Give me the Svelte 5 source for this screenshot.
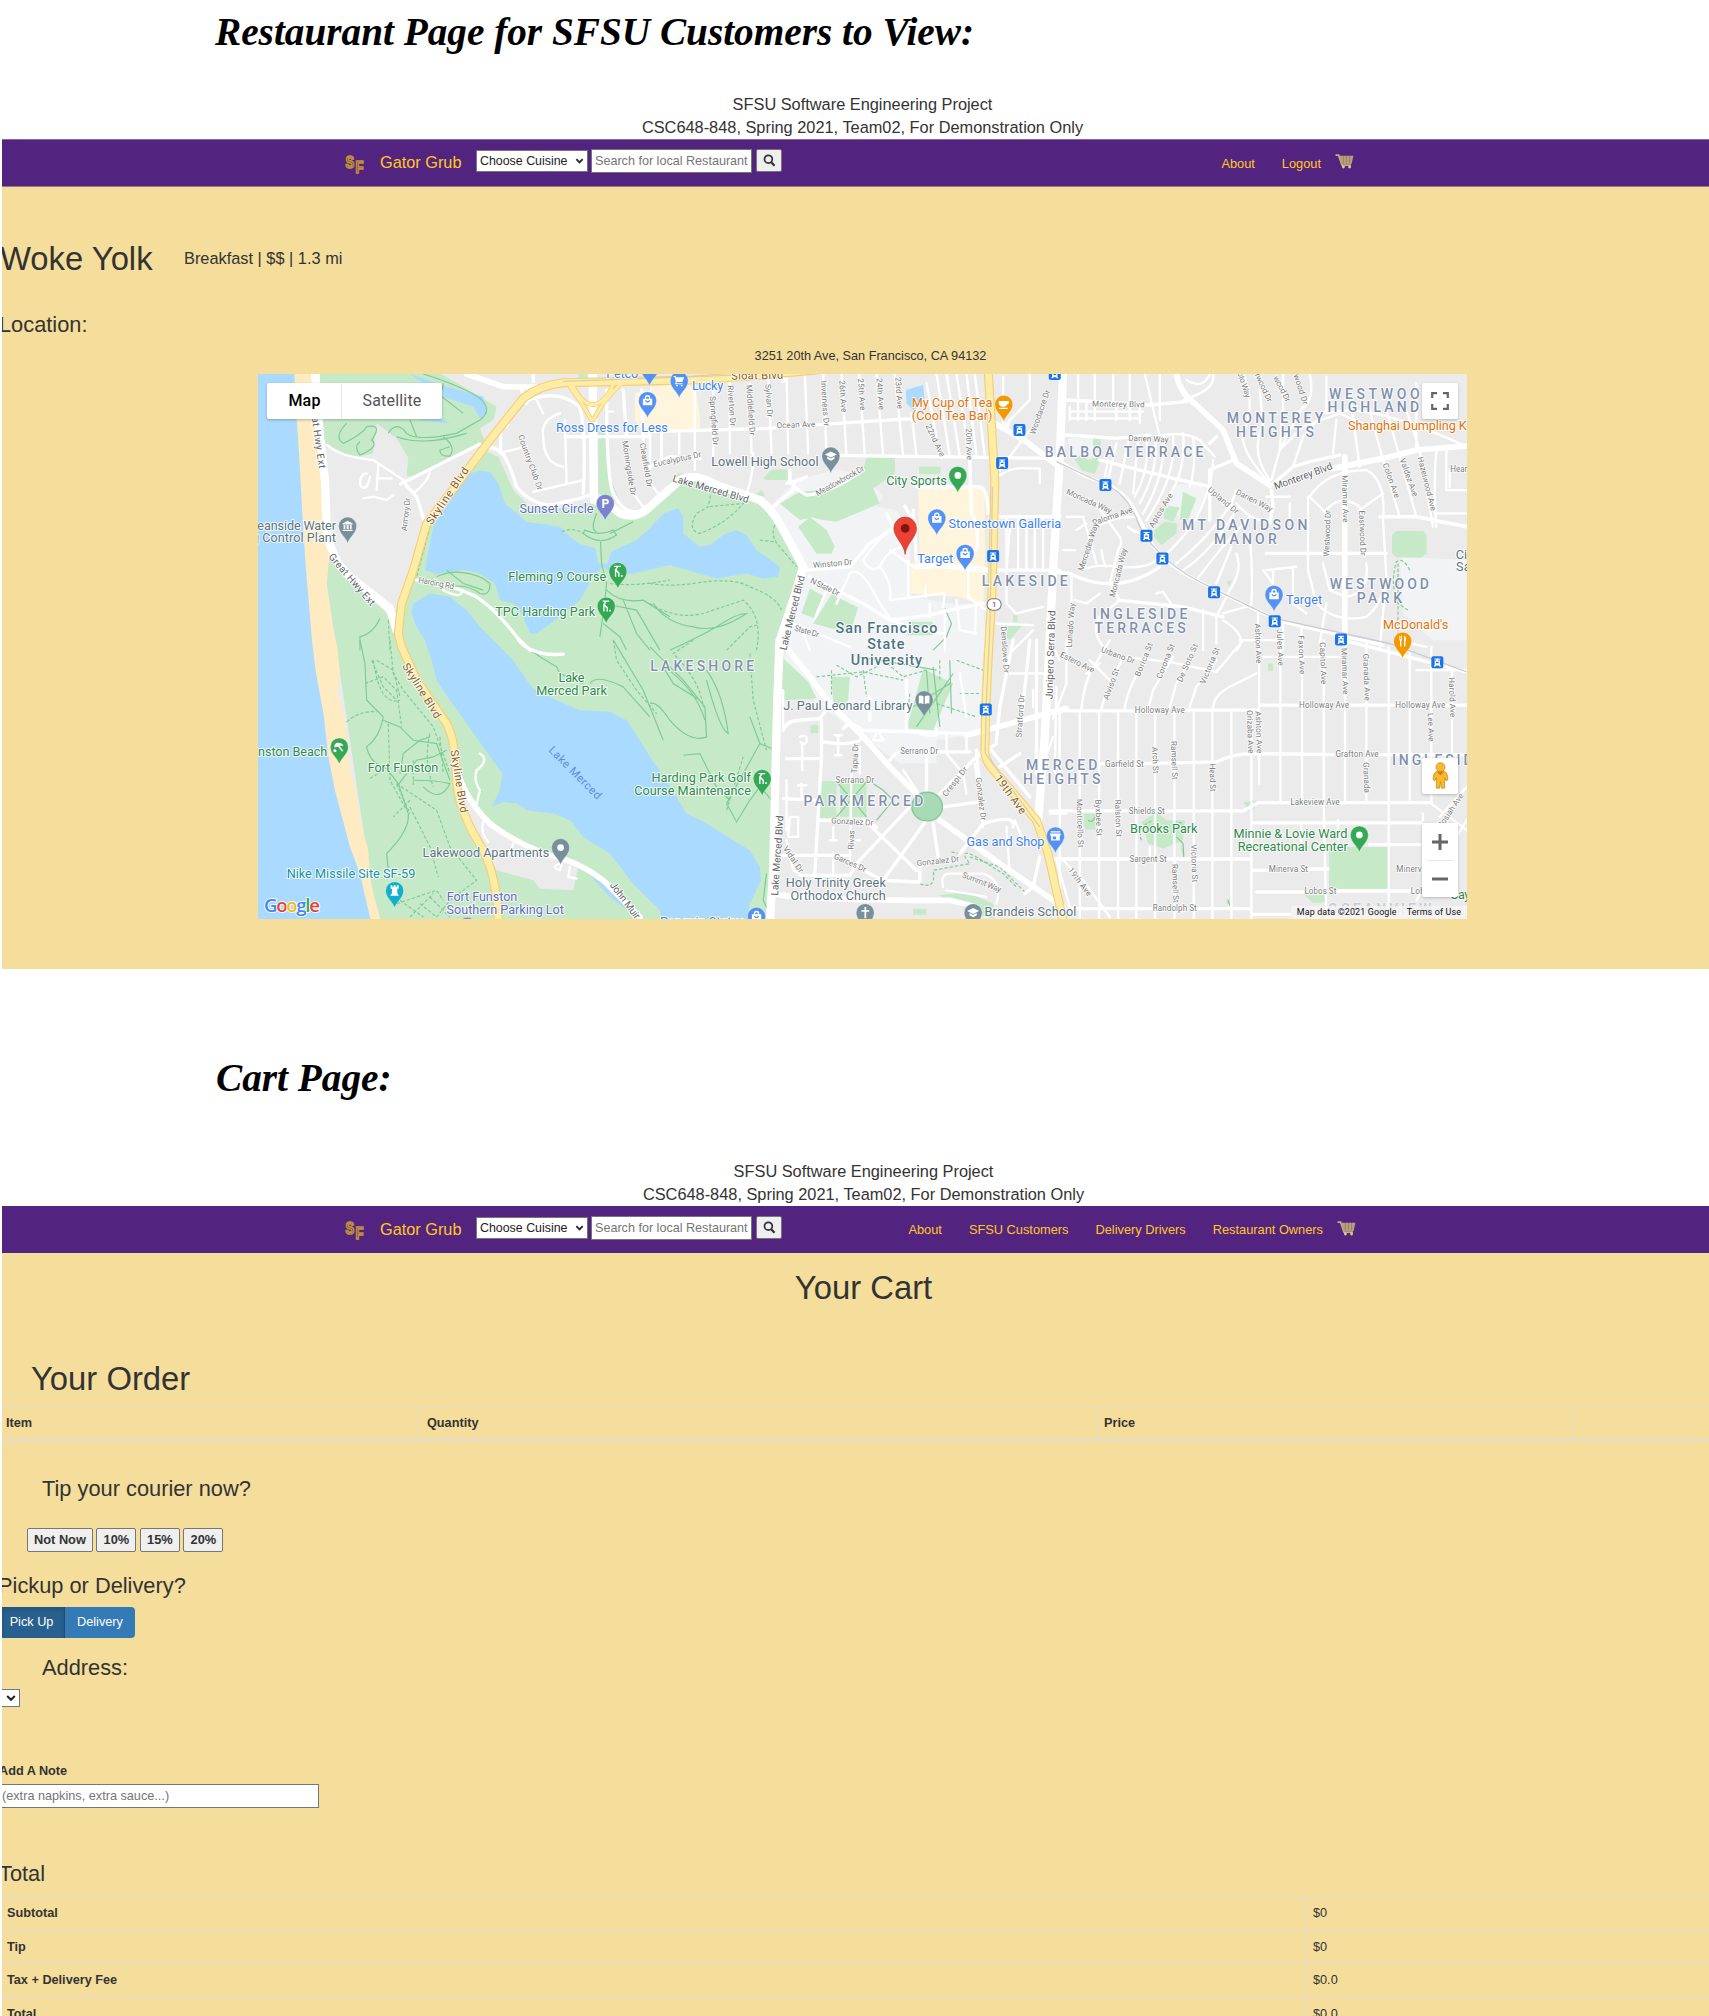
<script>
  const guestLinks = ['About', 'Logout'];
  const publicLinks = ['About', 'SFSU Customers', 'Delivery Drivers', 'Restaurant Owners'];
  const tips = ['Not Now', '10%', '15%', '20%'];
  const totals = [
    ['Subtotal', '$0'],
    ['Tip', '$0'],
    ['Tax + Delivery Fee', '$0.0'],
    ['Total', '$0.0']
  ];

  // The map is drawn from sectors; every sector has its own origin, 3 units to a pixel.
  const sectors = [
    {
      x: 0, y: 0,
      park: [
        'M210,12H575L640,50 740,110 730,150 690,175 705,215 500,322 470,318 475,262 440,205 380,160 368,252 300,262 230,222 190,140Z',
        'M985,12H1012V50H985ZM1045,170L1070,190 1075,300 1110,400 1045,370Z'
      ],
      water: ['M505,150L600,160 560,140ZM480,12L590,50 700,80 712,130 690,145 670,110 580,80Z'],
      land: ['M740,240L960,200 1010,380 880,410 800,350Z'],
      mall: ['M1155,70L1200,60V200H1190L1155,150Z'],
      trail: [
        'M290,160Q250,200 280,220Q340,190 350,170Q400,160 365,210Q390,230 330,255Q310,230 330,215M415,190Q440,150 470,190Q500,215 620,190L690,150Q730,120 690,85Q640,50 520,12M440,200Q520,230 650,190M480,150L500,200M550,60L640,130M580,40L560,140M600,230L570,240Q570,260 600,258Q620,230 580,200',
        'M1000,490Q1050,530 1100,495L1090,480Q1050,500 1005,480ZM1040,430Q1020,480 1040,485M1150,455Q1100,480 1080,490M1052,515L1055,580 1070,640 1065,690 1050,800M1070,660Q1110,700 1180,690L1260,740M1120,690L1160,790 1200,840M1060,760L1110,800 1130,840M1060,700L1160,720 1230,840',
        'M560,620Q620,590 700,625L720,640Q720,680 690,670Q650,640 600,650M590,600L640,640 700,660M390,745Q370,790 330,800V840'
      ],
      dash: ['M700,250L620,350 540,470 500,620M935,485Q970,470 1000,490M1080,640Q1150,650 1260,630M415,750L420,840'],
      wide: ['M650,12L760,50 880,52'],
      mid: [
        'M752,180V240Q780,280 800,350Q840,400 900,405L990,385 1020,375M700,230Q740,230 755,250M452,342L690,222M468,345L500,380 525,460',
        'M815,60L830,100M770,170Q790,100 850,85Q930,60 990,110Q1010,200 1000,370M1070,60Q1070,330 1090,370Q1120,430 1160,425M500,630Q600,640 680,680Q740,720 800,800L840,840',
        'M945,200H1200M850,12V35M1120,60L1130,200M1175,60L1180,210'
      ],
      thin: [
        'M232,225Q270,260 370,270L460,330M385,285L380,360M350,310Q330,310 330,345Q350,370 360,320M380,325H425M340,385L370,380 410,390 430,375M490,370Q540,330 540,300',
        'M765,245L830,230M860,90L880,130M930,130Q870,150 880,200Q880,280 940,290M945,150L950,340M850,365L1000,330M580,660Q640,690 635,660M1200,190V300M1235,180V260M1070,125H1090M1150,370L1180,410M1205,345L1225,370'
      ]
    },
    {
      x: 1200, y: 0,
      park: [
        'M390,400L450,365 520,360 600,330 640,300 650,262 735,264 735,310 670,355 690,400 560,455 520,450 480,440 530,480 555,530 545,550 500,550 445,470 475,445 450,450Z',
        'M340,325L365,298 413,298V330L350,330ZM315,375L335,360 345,375 325,385ZM808,290H872V312H808ZM455,730L480,655 525,680 500,720 495,745ZM545,672L625,712 600,790 490,760ZM775,755H848V795H775ZM1090,735H1103V755H1090ZM1075,768L1118,765 1080,810 1070,800Z'
      ],
      water: ['M768,60L820,45 825,100 790,120 770,100Z'],
      land: [],
      campus: ['M360,410L440,330 560,300 640,310 700,380 680,410 740,420 780,480 785,680 900,700 1000,700 1010,840H380L470,600Z'],
      mall: ['M0,50L135,40 150,140 150,175 0,190ZM805,350H1005V600L1000,710 930,680 780,670 785,580 810,570Z'],
      trail: ['M10,700Q50,760 130,770Q200,790 290,730Q260,730 200,770Q150,800 60,840M885,715L905,760 890,800 850,840'],
      dash: [
        'M185,360L175,410 140,430Q110,480 150,490Q230,460 280,400L175,410M375,465Q360,500 390,530L440,590M330,510L375,515',
        'M0,640Q60,650 130,640Q250,620 300,650Q380,680 395,720M0,700Q80,750 160,730L280,690Q340,740 320,840M230,840L300,770 320,765'
      ],
      wide: ['M1035,160L1130,215 1215,280M800,590L870,585 1010,600', 'M400,30V0'],
      mid: [
        'M0,185L340,176 640,155 790,146M560,256L1000,262 1230,265M0,290L60,260 150,265M370,410L430,360Q440,320 410,340M430,350L470,375Q540,370 640,300M420,300V340L470,320',
        'M470,600L600,590 660,520 745,465M480,620L560,660 640,700 720,750 840,735 900,720 1000,700M790,420L800,570M765,408L800,470M710,430L745,500M800,350H990Q1015,360 1015,430M960,270L965,430Q990,470 980,540L920,545',
        'M1040,600H1230M1045,440H1230'
      ],
      thin: [
        'M35,185V270M88,185V250M135,40V300M190,40V260M240,12V250M300,40L305,250M355,12L365,250M290,370Q310,320 310,250M410,12L415,250M465,12L475,250M520,12L530,250M575,12L590,258M628,12L645,258M680,12L700,258M735,12L760,258M785,130L800,258M860,12L900,258M890,12L930,258M920,12L960,262M950,12L980,258M975,12L1005,258M830,40L860,200',
        'M600,610Q630,580 690,700L720,745M560,700L600,610M640,570Q660,610 690,590Q710,540 760,530M690,590Q730,640 720,690M640,570Q700,480 740,480M720,540L790,590M720,690L880,670M827,650V680M885,670L880,710M720,750L780,770 880,790M885,720V840M920,690L930,780 980,790M980,700L975,790M495,745L530,660M430,760L600,830M460,790L480,840M775,570V680M955,600V680L1010,720M840,740V700',
        'M1060,170L1140,90V12M1070,180L1080,150M1045,320Q1080,290 1130,295H1170V340M1050,300L1140,180M1060,20V160M1070,440V700L1100,730 1180,710M1080,475L1070,600M1105,450V600M1130,450V600M1155,450V600M1180,450V600M1040,760L1150,765M1090,840L1150,780'
      ]
    },
    {
      x: 2400, y: 0,
      park: [
        'M130,205H153V235L130,225ZM75,268L95,255 115,270 155,260 135,312 95,300ZM400,365L440,385 415,450 390,450ZM345,420L360,408 390,412 370,455 342,445ZM315,480L345,455 383,460 380,490 335,525 312,500ZM1040,483H1120L1131,495V550L1115,562H1040L1027,550V495ZM530,635L545,630 540,650Z'
      ],
      campus: ['M55,205H130V260L60,255ZM375,345L440,340 475,360 450,430 400,460 355,400ZM1050,560L1251,570V810H1150L1060,730Z'],
      trail: [],
      dash: ['M1080,600Q1060,560 1040,575Q1020,640 1045,700L1075,720M1045,580V810'],
      wide: ['M380,12Q390,70 440,105L520,180 560,280 660,345M850,295L1000,265 1100,240 1251,228', 'M885,260V820'],
      mid: [
        'M50,90L140,95 300,105 410,95M50,195L200,205 300,195M20,270L110,320 180,345Q240,380 260,430L300,510Q340,580 440,630L620,720 700,755 1000,825',
        'M150,270L370,325 480,350M660,350L730,290 780,275 870,255M0,605L60,610Q200,680 330,590M205,690L400,710 520,740M665,360L670,410 660,460M650,550H1010',
        'M550,270L480,300 480,450M480,220L500,200M990,440L1050,440 1100,440 1251,470'
      ],
      thin: [
        'M85,12V90M135,12V100M190,12V100M240,12V100M285,12L330,200M330,12V150M60,145H270M60,125H280M60,150V110M85,90V150M110,90V150M135,100V150M270,100V160M240,100V150M200,100V150M400,90Q500,60 490,12M320,200Q400,180 450,210L495,260M410,30Q460,60 480,12',
        'M175,270L165,320M200,220L175,330M235,215L210,340M265,215L250,370M290,210Q300,300 255,380M315,200Q330,290 270,400M340,200Q350,310 280,430M370,200Q380,320 290,450M400,190Q410,320 340,400M430,200Q440,290 420,350M490,270Q490,330 460,400Q430,480 340,560M560,360L545,400Q480,500 380,580M545,400L560,420Q480,550 400,600M600,440L510,540 440,630M545,530L500,640M560,550Q580,600 540,660L500,740V820M600,500Q610,600 605,700',
        'M45,370L130,390 210,500Q220,520 205,540M125,490Q160,440 260,440M80,480L110,460M50,440L100,440 140,580M90,600Q150,580 200,590Q300,600 330,560M205,540L180,640 210,690L150,740Q120,790 170,840M155,540Q160,580 170,590M235,470Q270,500 290,480M40,540H75M65,610V760M75,690L110,700 150,670M370,710L340,665 320,670M520,730L605,705M520,750Q600,800 560,840M460,720V840',
        'M580,12Q620,100 580,190Q570,240 660,340M630,60L640,160Q600,250 660,330M700,12V110L690,240 665,330M760,110Q720,180 690,240M780,12Q800,100 740,130M690,240L760,170 870,130L960,170M830,20V120L760,200 730,290M860,150L850,250M900,70L930,290M960,120L1000,270 1050,440M1010,120L1050,260 1100,440M1070,120L1110,240 1150,470M1160,240Q1150,340 1160,470M1190,240V360H1251M830,130Q950,90 1251,230M1100,40V230',
        'M780,380Q830,300 950,300Q1010,330 1000,450L1010,620Q1000,700 950,740Q860,760 800,700L775,600V380M830,420Q870,370 930,410L945,560M820,580L840,660 890,680Q960,670 950,580M780,380L830,430M1000,370L930,420M830,700L810,820M650,380H720M660,450Q610,460 560,400M720,400V440M650,600L740,590M640,600L670,640M730,590V700L770,730M670,600V640M570,810H700M700,760V840M755,770V840M625,730V840M1160,430H1251M1200,300V350M990,840L1010,620'
      ]
    },
    {
      x: 0, y: 810,
      park: [],
      land: ['M625,430L690,520 780,590 960,660 985,680 970,750 870,745 850,720 740,690 660,560Z'],
      trail: [
        'M330,0L345,70 350,180 400,230Q390,290 350,320Q360,370 410,385L445,430 475,520Q480,570 410,640L415,690M400,240L450,260 490,300 560,310 600,420M450,400L460,340 510,300 540,290M440,440L500,360 550,350 590,330M520,440Q570,490 600,430Q560,420 490,420M1090,0L1180,150 1240,300M1020,130Q1040,100 1120,140L1200,230M800,0L870,50 920,80 930,100 1000,130'
      ],
      dash: ['M290,245Q330,210 380,215M415,250L420,420 470,510M440,430L560,510 600,620 680,720 600,780 560,830M365,60L400,140 440,180M420,0L430,100 460,150 550,260 600,400M345,130L400,110 440,150 455,260M380,60L430,90 450,170M370,60Q390,200 450,180M480,480L430,530M480,500L540,620 565,710M440,430L480,520M490,360L490,440M540,280Q520,360 550,440M570,290L580,400M440,790L560,750 580,780M480,830L550,760M540,770L600,830M510,790L560,830M450,780L520,830 M360,415L400,390M1090,0L1100,60 1160,150 1220,220'],
      wide: ['M625,400Q650,480 720,550Q800,610 900,645Q980,660 1060,720L1170,830'],
      mid: ['M805,0Q850,50 940,42M640,470L625,400'],
      thin: ['M690,340Q720,360 680,390Q670,420 690,450L680,490M700,545Q690,580 715,605M790,610L780,640M930,670Q900,680 930,690L935,670M960,680L955,710 980,715'],
      water: ['M1020,705L1070,740 1180,830 1160,830 1080,770Z']
    },
    {
      x: 1200, y: 810,
      park: [
        'M395,50L475,125 500,175 395,180ZM545,110H600L595,180 565,210 550,180ZM820,85L910,130 850,270 770,265 790,195ZM482,255H505V278H482ZM512,422H560V530L510,535ZM570,422H650V530H570ZM790,805H830V823H790ZM865,765L950,755 1030,790 1035,836 980,820Z'
      ],
      campus: ['M420,0H1000L990,270 960,285 860,300 860,370 750,370 640,290 500,190 400,60Z'],
      trail: [
        'M0,20L100,120 165,200 170,290Q120,310 60,240Q20,180 0,190M40,80L70,130 150,180M45,80Q140,150 165,240M170,90Q220,160 235,280Q210,270 170,120M300,230L330,310 365,325M330,310L230,490 260,545 300,480 330,440M100,345L150,340 200,440 240,480M320,430Q350,460 365,480M350,700L340,780 365,830',
        'M670,430L700,450 730,480 680,540M560,425L600,470 650,530M560,530L650,425M830,90L840,220M850,80L870,260M910,100L800,260M790,200L900,130M630,50L860,90M900,60L905,220'
      ],
      dash: ['M130,0L70,40Q150,120 160,200M300,40L310,180 350,330M230,510L280,350M500,110L640,95 760,120M560,75L620,110 680,80M545,90V170M640,90L650,170M770,250L780,160M700,60L760,110 830,90M870,60V120M860,190L980,230M920,60L1000,90M930,160H990M810,730Q860,750 850,690L960,670Q920,620 980,650L1060,700 1100,740M960,650L1050,680 1130,760M930,640L905,635'],
      wide: ['M400,10L480,110 540,190 640,290 720,380 810,470M870,540L1050,670 1240,800M370,760Q450,780 900,780L980,800', 'M950,285L1100,245 1250,205'],
      mid: [
        'M400,270Q410,240 450,240L510,235 545,190M515,240V350L495,700M580,265Q600,240 640,270L950,280M640,290Q620,320 520,305M410,355H505M400,475L500,480M510,540L650,545 800,690M400,645H600M600,705L620,670 780,500M450,705H600M870,460L1000,330M720,360Q740,330 770,335H960',
        'M650,695L700,720 810,725V670M700,720L830,540M640,540L680,560M880,500L990,485M850,550L865,650M930,640L1000,550Q1100,520 1090,560M830,330V450M660,240V170M770,120V270M1040,310L980,350M980,330L990,440M1125,760L1150,740L1170,650',
        'M1090,0L1050,200 1040,300M1140,0L1110,290M1000,300L1140,470M1160,0V400M1050,380L1110,340'
      ],
      thin: [
        'M450,290Q470,280 472,300Q465,320 452,305M457,310V390M565,285V345M555,285H575M555,345H575M455,430V470M445,435H470M410,420V570M420,530H445V590H415ZM550,560V600M540,600H560M550,640V700M630,320V400M605,400L600,660M620,600H630M410,600L430,690 465,710M400,150V270M760,390L800,450M890,340L940,400 950,460M975,370L1000,560M1070,560L1080,700M1095,540L1120,600M880,740Q870,700 900,700H1000Q1060,720 1040,790M890,750Q960,760 1010,770M680,280L670,300 700,300 690,280M800,270Q810,290 860,285V265M890,285V335M950,285V335M930,100L950,230M1080,100H1180M1150,150V200M1200,520H1250M1210,290L1170,400M1220,140L1215,400M1230,220V500'
      ]
    },
    {
      x: 2400, y: 810,
      park: [
        'M582,485L625,482 610,510 595,508ZM838,620H1015V745H838ZM100,520H137V568H105ZM275,545L320,515 350,540 405,540 400,600 340,625 295,610ZM655,70H670V92H655ZM765,765H828V785L790,788ZM530,775H545V790H530ZM390,600L405,640 400,655Z'
      ],
      trail: ['M380,590L400,610 402,650M535,780L540,795M115,540Q130,550 135,530'],
      dash: ['M275,600Q260,560 310,540M370,545Q410,540 400,580'],
      mid: [
        'M0,212L90,212H260M405,210H625M630,195H750M900,195H1035M1190,195H1251M150,370H165M285,370L500,365Q550,340 610,340L850,343M990,343H1251M0,512H230M350,512H580L625,487L720,487M870,487H1145M610,548H1115M0,656H235M355,656H605M60,805H310M445,805H600M610,822H720M610,690H655M775,686H835M620,755H760M865,752H1090M960,613H1110M880,0L1251,95'
      ],
      thin: [
        'M30,212V836M90,212V836M148,212V836M205,212V836M260,212V836M316,212V836M374,212V836M432,212V836M488,212V836M545,212V836M605,212V836M628,0V430M692,0V480M757,0V480M822,0V490L830,836M886,0V480M950,0V480M1017,20V836M1080,40V480M1145,20V490L1251,570M1207,90V340M755,550V615M865,540V600',
        'M10,235L50,130V0M95,205Q100,150 120,100L180,0M155,205L165,170 220,50M150,70L110,100M180,120L120,60M225,205Q230,150 290,50M295,205L310,150 370,50M360,200L380,130 430,50M420,200L440,140 500,60M490,205Q490,160 560,130L620,100M220,50L360,65 500,95Q530,60 580,0M640,50H880M0,0L30,60M1120,540V520M1100,90H1251M1170,530L1251,440M20,660L60,800M1040,0L1130,20',
        'M30,650L100,720 180,830M300,620V656M1251,540L1100,780'
      ]
    }
  ];

  // text, centre x, centre y, drawn length, rotation, kind
  const labels = [
    { x: 0, y: 0, items: [
      ['Ross Dress for Less', 1086, 173, 336, 0, 'shop'], ['Petco', 1117, 12, 96, 0, 'shop'],
      ['Sunset Circle', 920, 415, 222, 0, 'parking'], ['eanside Water', 140, 465, 236, 0, 'civic'],
      ['g Control Plant', 132, 503, 252, 0, 'civic'], ['Fleming 9 Course', 922, 619, 294, 0, 'nature'],
      ['TPC Harding Park', 886, 723, 300, 0, 'nature'], ['Great Hwy Ext', 203, 193, 206, 82, 'road'],
      ['Great Hwy Ext', 306, 628, 196, 49, 'road'], ['Skyline Blvd', 592, 377, 200, -56, 'major'],
      ['Armory Dr', 467, 433, 100, -84, 'street'], ['Country Club Dr', 842, 277, 174, 70, 'street'],
      ['Morningside Dr', 1138, 294, 166, 81, 'street'], ['Clearfield Dr', 1189, 285, 134, 80, 'street'],
      ['Harding Rd', 559, 639, 108, 11, 'street']
    ] },
    { x: 1200, y: 0, items: [
      ['Lucky', 173, 48, 94, 0, 'shop'], ['Sloat Blvd', 322, 16, 156, -1, 'major'],
      ['My Cup of Tea', 907, 99, 242, 0, 'food'], ['(Cool Tea Bar)', 907, 137, 242, 0, 'food'],
      ['Lowell High School', 345, 274, 322, 0, 'civic'], ['City Sports', 800, 331, 182, 0, 'nature'],
      ['Stonestown Galleria', 1065, 459, 338, 0, 'shop'], ['Target', 856, 566, 108, 0, 'shop'],
      ['Lake Merced Blvd', 183, 356, 236, 16, 'road'], ['Lake Merced Blvd', 427, 728, 230, -76, 'road'],
      ['Winston Dr', 548, 580, 118, -5, 'street'], ['N State Dr', 526, 650, 94, 26, 'street'],
      ['State Dr', 471, 783, 76, 16, 'street'], ['Meadowbrook Dr', 570, 332, 162, -29, 'street'],
      ['Eucalyptus Dr', 82, 267, 146, -12, 'street'], ['Ocean Ave', 438, 164, 116, -2, 'street'],
      ['Springfield Dr', 193, 152, 148, 86, 'street'], ['Riverton Dr', 246, 107, 122, 86, 'street'],
      ['Middlefield Dr', 303, 120, 152, 86, 'street'], ['Sylvan Dr', 358, 92, 100, 86, 'street'],
      ['Inverness Dr', 526, 100, 136, 86, 'street'], ['26th Ave', 580, 79, 96, 86, 'street'],
      ['25th Ave', 636, 73, 96, 86, 'street'], ['24th Ave', 692, 72, 96, 86, 'street'],
      ['23rd Ave', 748, 69, 96, 86, 'street'], ['22nd Ave', 857, 211, 104, 65, 'street'],
      ['20th Ave', 958, 222, 96, 88, 'street'], ['Woodacre Dr', 1170, 126, 140, -71, 'street'],
      ['LAKESIDE', 1125, 632, 258, 0, 'area'], ['San Francisco', 710, 773, 306, 0, 'campus-name'],
      ['State', 708, 821, 112, 0, 'campus-name'], ['University', 710, 870, 214, 0, 'campus-name'],
      ['Denslowe Dr', 1066, 838, 140, 86, 'street']
    ] },
    { x: 2400, y: 0, items: [
      ['BALBOA TERRACE', 223, 245, 476, 0, 'area'], ['MONTEREY', 676, 145, 290, 0, 'area'],
      ['HEIGHTS', 676, 185, 234, 0, 'area'], ['WESTWOOD', 993, 71, 310, 0, 'area'],
      ['HIGHLANDS', 988, 111, 310, 0, 'area'], ['MT DAVIDSON', 585, 466, 376, 0, 'area'],
      ['MANOR', 587, 507, 188, 0, 'area'], ['WESTWOOD', 989, 643, 298, 0, 'area'],
      ['PARK', 989, 685, 136, 0, 'area'], ['INGLESIDE', 271, 733, 284, 0, 'area'],
      ['TERRACES', 271, 774, 274, 0, 'area'], ['Shanghai Dumpling K', 1073, 168, 356, 0, 'food'],
      ["McDonald's", 1098, 764, 196, 0, 'food'], ['Target', 763, 688, 108, 0, 'shop'],
      ['Monterey Blvd', 206, 102, 158, 1, 'street'], ['Darien Way', 296, 206, 120, 2, 'street'],
      ['Monterey Blvd', 760, 318, 184, -20, 'road'], ['Moncada Way', 118, 393, 146, 24, 'street'],
      ['Paloma Ave', 188, 438, 126, -19, 'street'], ['Mercedes Way', 115, 530, 150, -72, 'street'],
      ['Moncada Way', 205, 607, 150, -76, 'street'], ['Aptos Ave', 333, 420, 116, -59, 'street'],
      ['Upland Dr', 521, 391, 112, 40, 'street'], ['Darien Way', 614, 391, 120, 27, 'street'],
      ['Westwood Dr', 832, 490, 140, -88, 'street'], ['Miramar Ave', 887, 386, 142, 89, 'street'],
      ['Eastwood Dr', 939, 489, 136, 88, 'street'], ['Colon Ave', 1025, 331, 110, 70, 'street'],
      ['Valdez Ave', 1078, 322, 120, 70, 'street'], ['Hazelwood Ave', 1132, 341, 166, 76, 'street'],
      ['oto Way', 584, 44, 80, 72, 'street'], ['rwood Dr', 642, 52, 92, 65, 'street'],
      ['wood Dr', 697, 56, 84, 62, 'street'], ['wood Dr', 754, 58, 94, 72, 'street'],
      ['Hearst', 1237, 298, 70, 0, 'street'], ['Lunado Way', 62, 765, 134, -86, 'street'],
      ['City', 1250, 552, 64, 0, 'civic'], ['San', 1252, 590, 66, 0, 'civic'],
      ['Junipero Serra Blvd', 2, 854, 266, -88, 'road']
    ] },
    { x: 0, y: 810, items: [
      ['nston Beach', 128, 335, 208, 0, 'nature'], ['Fort Funston', 459, 381, 212, 0, 'nature'],
      ['Lake', 965, 112, 78, 0, 'nature'], ['Merced Park', 965, 150, 212, 0, 'nature'],
      ['Lakewood Apartments', 708, 638, 380, 0, 'civic'], ['Nike Missile Site SF-59', 303, 700, 386, 0, 'sight'],
      ['Fort Funston', 696, 769, 212, 0, 'parking'], ['Southern Parking Lot', 766, 807, 352, 0, 'parking'],
      ['Skyline Blvd', 516, 151, 188, 58, 'major'], ['Skyline Blvd', 628, 423, 190, 81, 'major'],
      ['Lake Merced', 976, 397, 208, 45, 'lake'], ['John Muir', 1126, 780, 130, 53, 'road']
    ] },
    { x: 1200, y: 810, items: [
      ['LAKESHORE', 157, 79, 312, 0, 'area'], ['J. Paul Leonard Library', 594, 195, 388, 0, 'civic'],
      ['Harding Park Golf', 154, 412, 298, 0, 'nature'], ['Course Maintenance', 128, 450, 350, 0, 'nature'],
      ['PARKMERCED', 641, 482, 360, 0, 'area'], ['Holy Trinity Greek', 558, 728, 300, 0, 'civic'],
      ['Orthodox Church', 565, 766, 286, 0, 'civic'], ['Gas and Shop', 1067, 604, 234, 0, 'shop'],
      ['Penguin Statue', 158, 843, 256, 0, 'shop'], ['Brandeis School', 1142, 813, 276, 0, 'civic'],
      ['Lake Merced Blvd', 382, 646, 240, -86, 'road'], ['Serrano Dr', 808, 334, 114, 0, 'street'],
      ['Serrano Dr', 615, 419, 116, 0, 'street'], ['Gonzalez Dr', 607, 544, 126, 3, 'street'],
      ['Tapia Dr', 615, 354, 90, -87, 'street'], ['Rivas', 604, 599, 58, -87, 'street'],
      ['Garces Dr', 601, 667, 104, 24, 'street'], ['Vidal Dr', 431, 657, 90, 56, 'street'],
      ['Crespi Dr', 915, 424, 106, -52, 'street'], ['Gonzalez Dr', 994, 476, 130, 83, 'street'],
      ['Gonzalez Dr', 864, 662, 128, -6, 'street'], ['Summit Way', 996, 725, 124, 22, 'street'],
      ['19th Ave', 1083, 462, 136, 54, 'major'], ['Stratford Dr', 1111, 227, 130, -86, 'street'],
      ['MERCED', 1236, 376, 214, 0, 'area'], ['HEIGHTS', 1236, 416, 232, 0, 'area']
    ] },
    { x: 2400, y: 810, items: [
      ['Brooks Park', 342, 564, 202, 0, 'nature'], ['Minnie & Lovie Ward', 722, 581, 342, 0, 'nature'],
      ['Recreational Center', 729, 619, 330, 0, 'nature'], ['INGLESIDE', 1164, 359, 274, 0, 'area'],
      ['OCEANVIEW', 990, 806, 310, 0, 'area faint'], ['Cay', 1232, 764, 60, 0, 'nature'],
      ['Holloway Ave', 330, 211, 150, 0, 'street'], ['Holloway Ave', 823, 196, 150, 0, 'street'],
      ['Holloway Ave', 1112, 195, 150, 0, 'street'], ['Garfield St', 224, 371, 116, 0, 'street'],
      ['Grafton Ave', 922, 342, 130, 0, 'street'], ['Lakeview Ave', 796, 486, 148, 0, 'street'],
      ['Shields St', 291, 512, 108, 0, 'street'], ['Sargent St', 295, 657, 112, 0, 'street'],
      ['Minerva St', 716, 686, 118, 0, 'street'], ['Minerva', 1085, 686, 90, 0, 'street'],
      ['Lobos St', 812, 753, 96, 0, 'street'], ['Lobos', 1118, 751, 70, 0, 'street'],
      ['Randolph St', 375, 804, 132, 0, 'street'], ['Estero Ave', 83, 66, 112, 26, 'street'],
      ['Urbano Dr', 205, 45, 106, 20, 'street'], ['Alviso St', 184, 131, 98, -70, 'street'],
      ['Borica St', 282, 58, 106, -68, 'street'], ['Corona St', 347, 63, 110, -68, 'street'],
      ['De Soto St', 413, 68, 122, -66, 'street'], ['Victoria St', 480, 76, 116, -67, 'street'],
      ['Arch St', 317, 360, 80, 88, 'street'], ['Ramsell St', 374, 360, 116, 88, 'street'],
      ['Head St', 489, 412, 84, 88, 'street'], ['Orizaba Ave', 602, 275, 130, 88, 'street'],
      ['Ashton Ave', 628, 276, 126, 88, 'street'], ['Ashton Ave', 626, 10, 120, 88, 'street'],
      ['Jules Ave', 692, 22, 110, 88, 'street'], ['Faxon Ave', 756, 44, 116, 88, 'street'],
      ['Capitol Ave', 821, 69, 126, 88, 'street'], ['Miramar Ave', 886, 93, 140, 88, 'street'],
      ['Granada Ave', 951, 111, 142, 88, 'street'], ['Granada', 951, 412, 92, 88, 'street'],
      ['Harold Ave', 1208, 171, 120, 88, 'street'], ['Lee Ave', 1144, 261, 86, 88, 'street'],
      ['Monticello St', 91, 549, 146, 88, 'street'], ['Byxbee St', 147, 532, 110, 88, 'street'],
      ['Ralston St', 206, 534, 112, 88, 'street'], ['Victoria St', 434, 669, 114, 88, 'street'],
      ['Ramsell St', 377, 729, 116, 88, 'street'], ['19th Ave', 91, 724, 100, 53, 'street'],
      ['Josiah Ave', 1203, 510, 118, -56, 'street']
    ] }
  ];

  const blue = '#5491f5', green = '#34a853', slate = '#78909c', orange = '#f29900';
  // tip x, tip y, colour, glyph
  const pins = [
    [1199, 48, blue, 'bag'], [1193, 144, blue, 'bag'], [1288, 84, blue, 'cart'], [293, 520, slate, 'museum'],
    [1066, 452, '#7b83cf', 'P'], [1104, 656, green, 'golf'], [1069, 760, green, 'golf'], [1743, 310, slate, 'school'],
    [2124, 368, green, 'dot'], [2262, 155, orange, 'cup'], [2061, 496, blue, 'bag'], [2146, 602, blue, 'bag'],
    [3073, 725, blue, 'bag'], [3459, 865, orange, 'fork'], [268, 1182, green, 'beach'], [932, 1484, slate, 'dot'],
    [434, 1613, '#12b0c9', 'tower'], [2023, 1041, slate, 'book'], [1537, 1277, green, 'golf'], [2417, 1449, blue, 'shop'],
    [3329, 1446, green, 'dot'], [1846, 1679, slate, 'cross'], [2170, 1679, slate, 'school'], [1520, 1690, blue, 'bag'],
    [652, 1720, '#7b83cf', 'dot']
  ];

  const glyphs = {
    bag: 'M-14,-6H14V14H-14ZM-8,-6V-10Q-8,-17 0,-17Q8,-17 8,-10V-6H4V-10Q0,-15 -4,-10V-6ZM-8,-1Q-6,6 0,6Q6,6 8,-1H4Q2,2 0,2Q-2,2 -4,-1Z',
    cart: 'M-17,-14H-11L-9,-10H15L9,4H-7L-9,8H10V11H-13L-10,3 -14,-11H-17ZM-9,13H-4V17H-9ZM5,13H10V17H5Z',
    museum: 'M-15,-8L0,-16 15,-8V-5H-15ZM-12,-3H-7V9H-12ZM-3,-3H3V9H-3ZM7,-3H12V9H7ZM-15,11H15V15H-15Z',
    golf: 'M-11,-17H9V-13H1L-4,-6 5,4V16H1V6L-5,1V16H-9V-6L-4,-13H-11ZM9,11H14V16H9Z',
    school: 'M0,-14L18,-5 0,4 -18,-5ZM-11,1L0,7 11,1V8L0,14 -11,8Z',
    dot: 'M-10,0A10,10 0 1 0 10,0A10,10 0 1 0 -10,0Z',
    cup: 'M-15,-10H13Q19,-8 13,0H10Q8,7 2,7H-5Q-12,7 -15,-2ZM-14,10H12V14H-14Z',
    fork: 'M-10,-16H-7V-6H-5V-16H-2V-6Q-2,-2 -4,-1V16H-8V-1Q-10,-2 -10,-6ZM4,-16Q11,-14 10,0H8V16H4Z',
    beach: 'M-15,2Q-16,-14 0,-12Q10,-12 12,-3L0,-4 12,12 8,14 -4,-1ZM-13,6A5,5 0 1 0 -8,11Z',
    tower: 'M-12,-16H-7V-12H-3V-16H3V-12H7V-16H12V-6H8V8L13,15H-13L-8,8V-6H-12Z',
    book: 'M-16,-12Q-8,-15 -2,-10V13Q-8,9 -16,11ZM16,-12Q8,-15 2,-10V13Q8,9 16,11Z',
    shop: 'M-14,-14H14V-10H-14ZM-16,-7H16V-1H13V14H2V2H-8V10H1V14H-13V-1H-16Z',
    cross: 'M-2,-17H3V-8H12V-3H3V17H-2V-3H-11V-8H-2Z'
  };

  const stations = [
    [2415, 12], [2309, 180], [2257, 279], [2230, 558], [2208, 1018], [2567, 345], [2690, 497], [2738, 565],
    [2893, 666], [3075, 753], [3274, 808], [3563, 876]
  ];

  const layers = ['campus', 'park', 'land', 'mall', 'water', 'trail', 'dash', 'thin', 'mid', 'wide'];
</script>

{#snippet banner(links, ruled)}
  <div class="notice">
    <div>SFSU Software Engineering Project</div>
    <div>CSC648-848, Spring 2021, Team02, For Demonstration Only</div>
  </div>
  <nav class:ruled>
    <svg class="logo" viewBox="0 0 20 20" width="20" height="20">
      <text class="mark" transform="translate(.5 14) scale(1 1.3)">S</text>
      <text class="mark" transform="translate(10.5 18.5) scale(1 1.3)">F</text>
    </svg>
    <span class="brand">Gator Grub</span>
    <span class="select">Choose Cuisine
      <svg viewBox="0 0 10 10" width="9" height="10"><path d="M1.5 3L5 6.6 8.5 3" fill="none" stroke="#222" stroke-width="1.9" /></svg>
    </span>
    <span class="search">Search for local Restaurant</span>
    <span class="go">
      <svg viewBox="0 0 14 14" width="13" height="13"><circle cx="5.8" cy="5.6" r="4.2" fill="none" stroke="#333" stroke-width="1.9" /><path d="M8.8 8.8L12.4 12.6" stroke="#333" stroke-width="2.4" /></svg>
    </span>
    <div class="links">
      {#each links as link}<a href="#top">{link}</a>{/each}
      <svg class="trolley" viewBox="0 0 19 15" width="19" height="15">
        <path d="M0.5 1.2H3.6L7 11.2H16" fill="none" stroke="#c6ae80" stroke-width="1.7" />
        <path d="M4.2 1.8H18.4L16.6 10H6.8Z" fill="#b7a078" />
        <path d="M8.3 2V9.6M11.4 2V9.6M14.6 2V9.6" stroke="#8a7078" stroke-width=".7" />
        <circle cx="8.4" cy="13" r="1.4" fill="#e8d27a" /><circle cx="14.6" cy="13" r="1.4" fill="#e8d27a" />
      </svg>
    </div>
  </nav>
{/snippet}

<div class="page">
  <h1>Restaurant Page for SFSU Customers to View:</h1>

  <section class="screen restaurant">
    {@render banner(guestLinks, true)}
    <div class="body">
      <div class="title"><h2>Woke Yolk</h2><span>Breakfast | $$ | 1.3 mi</span></div>
      <h3 class="location">Location:</h3>
      <p class="street-address">3251 20th Ave, San Francisco, CA 94132</p>

      <div class="map">
        <svg viewBox="24 12 3628 1634" preserveAspectRatio="none" class="canvas">
          <rect x="0" y="0" width="3700" height="1700" fill="#ebebeb" />
          <path class="park" d="M237,565L330,650 425,745 500,600 540,440 620,330 690,235 745,260 790,360 840,410 900,420 1010,400 1080,400 1150,440 1200,420 1280,310 1320,310 1490,380 1540,400 1590,470 1650,580 1600,760 1575,810 1560,1646H380L230,640Z" />
          <path class="sand" d="M130,0H192L190,130 215,300 220,420 235,530 237,568 230,640 248,770 262,830 270,910 262,970 285,1050 290,1120 300,1190 320,1280 335,1370 355,1440 360,1530 392,1650H200L100,800Z" />
          <path class="water" d="M0,0H133L135,60 150,300 160,480 168,600 175,680 186,810 197,900 222,1040 235,1160 255,1260 300,1430 330,1510 362,1650H0Z" />
          <path class="water" d="M660,310L690,302 720,306 745,340 765,400 830,455 930,470 960,500 990,522 1036,534 1045,580 1072,582 1084,545 1160,510 1200,475 1240,430 1285,415 1300,440 1300,490 1350,530 1380,525 1420,495 1460,480 1490,495 1520,540 1590,590 1585,620 1540,625 1490,610 1400,625 1330,605 1260,585 1150,610 1090,615 1060,590 1030,620 990,690 930,740 860,790 840,790 820,740 790,700 750,690 735,640 690,610 640,600 560,612 525,600 530,570 550,470 600,370Z" />
          <path class="water" d="M490,700L540,670 600,680 650,720 690,770 790,870 830,930 850,955 920,990 990,1020 1080,1025 1130,1050 1170,1110 1200,1160 1250,1230 1310,1330 1370,1360 1450,1410 1500,1440 1530,1490 1533,1530 1500,1600 1490,1650H1235L1230,1620 1180,1570 1150,1540 1080,1450 1000,1400 960,1350 910,1330 830,1320 800,1300 760,1295 725,1310 750,1260 757,1210 700,1130 650,1060 600,990 560,930 545,870 525,810 500,770 485,730Z" />

          {#each layers as layer}
            {#each sectors as sector}
              <g transform="translate({sector.x} {sector.y})">
                {#each sector[layer] ?? [] as d}<path class={layer} {d} />{/each}
              </g>
            {/each}
          {/each}

          <ellipse cx="2032" cy="1309" rx="46" ry="43" fill="#a8dab5" stroke="#82c99a" stroke-width="4" />
          <path class="avenue" d="M2440,0L2430,260 2410,600 2400,800 2385,1100 2365,1350" />
          <path class="avenue" d="M195,0L210,200 225,330 230,480Q245,570 300,620L420,715 440,780" />
          <path class="avenue" d="M1028,0L1032,390Q1080,400 1110,430Q1160,450 1200,410L1290,330Q1330,305 1400,345L1530,390Q1570,420 1600,480L1660,590 1640,660 1590,810 1582,1000 1570,1500 1560,1650" />
          {#each ['highway-edge', 'highway'] as cls}
            <path class={cls} d="M1700,0L1500,18 1330,30 940,38Q870,45 820,85L720,210 600,370 530,460 490,600 455,700 445,790 455,830 500,930 590,1060Q618,1110 620,1240Q630,1330 700,1440Q740,1520 745,1650" />
            <path class={cls} d="M2215,0L2235,330 2230,560 2225,700 2218,810 2208,1010 2205,1150Q2210,1180 2240,1210L2360,1350 2395,1450 2440,1650" />
            <path class="{cls} ramp" d="M960,50Q990,90 1025,150M1115,40Q1060,90 1030,150M970,50Q1030,160 1090,45" />
          {/each}
          <path d="M2228,350L2220,780 2209,1010 2206,1150 2370,1370M940,34L1500,14" fill="none" stroke="#d8cfae" stroke-width="4" />
          <path d="M2420,275L2580,350Q2640,380 2670,470Q2730,580 2880,650L3075,745 3420,820 3651,905" fill="none" stroke="#c9ccd3" stroke-width="4" />

          {#each stations as [x, y]}
            <g transform="translate({x} {y})">
              <rect x="-18" y="-18" width="36" height="36" rx="6" fill="#1a73e8" />
              <path d="M-9,-11H9V-8H3V-5H8V8L11,13H6L4,10H-4L-6,13H-11L-8,8V-5H-3V-8H-9ZM-4,-1V3H4V-1Z" fill="#fff" />
            </g>
          {/each}

          {#each labels as group}
            <g transform="translate({group.x} {group.y})">
              {#each group.items as [text, x, y, length, turn, kind]}
                <text class={kind} transform="translate({x} {y}) rotate({turn})" dy=".35em" textLength={length}>{text}</text>
              {/each}
            </g>
          {/each}

          <rect x="2212" y="686" width="42" height="34" rx="16" fill="#fff" stroke="#777" stroke-width="3" />
          <text class="shield" x="2233" y="711">1</text>

          {#each pins as [x, y, color, glyph]}
            <g transform="translate({x} {y})">
              <path d="M0,0C-4,-18 -27,-30 -27,-52A27,27 0 1 1 27,-52C27,-30 4,-18 0,0Z" fill={color} stroke="#fff" stroke-opacity=".5" stroke-width="2" />
              {#if glyph === 'P'}
                <text class="pin-letter" y="-39">P</text>
              {:else}
                <path d={glyphs[glyph]} transform="translate(0 -52)" fill="#fff" fill-rule="evenodd" />
              {/if}
            </g>
          {/each}

          <path d="M1966,553C1963,520 1932,502 1932,475A34,34 0 1 1 2000,475C2000,502 1969,520 1966,553Z" fill="#ea4335" stroke="#c5362b" stroke-width="2" />
          <circle cx="1966" cy="475" r="13" fill="#7f1410" />

          <text class="google" x="42" y="1625" textLength="168">
            <tspan fill="#4285f4">G</tspan><tspan fill="#ea4335">o</tspan><tspan fill="#fbbc04">o</tspan><tspan fill="#4285f4">g</tspan><tspan fill="#34a853">l</tspan><tspan fill="#ea4335">e</tspan>
          </text>
        </svg>

        <div class="types"><b>Map</b><span>Satellite</span></div>
        <div class="control full">
          <svg viewBox="0 0 18 18" width="18" height="18"><path d="M1.2 6V1.2H6M12 1.2H16.8V6M16.8 12V16.8H12M6 16.8H1.2V12" fill="none" stroke="#666" stroke-width="2.2" /></svg>
        </div>
        <div class="control pegman">
          <svg viewBox="0 0 18 30" width="17" height="28">
            <path d="M5 10H13Q16.5 11 17 19L15 20 13.5 17V28H10L9 21 8 28H4.5V17L3 20 1 19Q1.500 11 5 10Z" fill="#fbb829" stroke="#b98a2c" stroke-width=".8" />
            <circle cx="9" cy="5.500" r="4.800" fill="#fbb829" stroke="#c8901c" stroke-width=".8" />
            <path d="M5 10.500L9 14.500 13 10.500Z" fill="#e0781e" />
          </svg>
        </div>
        <div class="control zoom">
          <svg viewBox="0 0 16 16" width="16" height="16"><path d="M8 0V16M0 8H16" stroke="#666" stroke-width="3" /></svg>
          <i></i>
          <svg viewBox="0 0 16 16" width="16" height="16"><path d="M0 8H16" stroke="#666" stroke-width="3" /></svg>
        </div>
        <div class="legal"><span>Map data ©2021 Google</span><span>Terms of Use</span></div>
      </div>
    </div>
  </section>

  <h1 class="second">Cart Page:</h1>

  <section class="screen cart">
    {@render banner(publicLinks, false)}
    <div class="body">
      <h2 class="page-title">Your Cart</h2>
      <h2 class="order">Your Order</h2>
      <div class="items"><b>Item</b><b>Quantity</b><b>Price</b><b></b></div>
      <h3 class="tip">Tip your courier now?</h3>
      <div class="tips">{#each tips as tip}<button>{tip}</button>{/each}</div>
      <h3 class="pickup">Pickup or Delivery?</h3>
      <div class="toggle"><span class="on">Pick Up</span><span>Delivery</span></div>
      <h3 class="address">Address:</h3>
      <div class="saved">
        <svg viewBox="0 0 10 10" width="10" height="10"><path d="M1.200 3L5 6.800 8.800 3" fill="none" stroke="#222" stroke-width="2" /></svg>
      </div>
      <div class="note-label">Add A Note</div>
      <div class="note">(extra napkins, extra sauce...)</div>
      <h3 class="total">Total</h3>
      <div class="totals">
        {#each totals as [name, value]}
          <div><b>{name}</b><span>{value}</span></div>
        {/each}
      </div>
    </div>
  </section>
</div>

<style>
  :global(body) { background: #fff; }
  .page { height: 2016px; overflow: hidden; font-family: 'Liberation Sans', Arial, sans-serif; color: #333; font-size: 12.7px; white-space: nowrap; }
  .page * { box-sizing: border-box; }
  h1 { margin: 0; padding: 8px 0 0 215px; height: 93px; font: italic bold 39.25px/48px 'Liberation Serif', 'Times New Roman', serif; color: #000; }
  h1.second { height: 188px; padding: 85px 0 0 216px; }
  h2, h3, p { margin: 0; font-weight: 400; }
  h2 { font-size: 32.8px; line-height: 36px; }
  h3 { font-size: 21.8px; line-height: 24px; }
  .screen { margin-left: 2px; overflow: hidden; }
  .notice { height: 46px; font-size: 16.35px; line-height: 23px; text-align: center; padding-left: 14px; }
  .cart .notice { height: 49px; padding-top: 3px; padding-left: 16px; }
  nav { height: 47px; background: #53247f; display: flex; align-items: flex-start; padding-left: 343px; color: #ffc91f; }
  nav.ruled { height: 48px; border-top: 1px solid #8b66a5; border-bottom: 1px solid #9a7585; }
  .logo { margin-top: 14px; width: 20px; overflow: visible; }
  .mark { font: bold 13px 'Liberation Sans', Arial, sans-serif; fill: #53247f; stroke: #c0913a; stroke-width: 1.3; }
  .brand { margin-left: 15px; width: 96px; font-size: 16.3px; line-height: 46px; }
  .ruled .brand { line-height: 45px; }
  .select, .search { border: 1px solid #767676; background: #fff; margin-top: 11px; line-height: 20px; font-size: 12.4px; }
  .select { width: 112px; padding: 0 3px; display: flex; justify-content: space-between; align-items: center; color: #222; height: 22px; }
  .search { width: 161px; margin-left: 3px; margin-top: 10px; height: 24px; line-height: 22px; padding-left: 3px; color: #757575; font-size: 12.6px; overflow: hidden; }
  .go { width: 26px; height: 23px; margin: 10px 0 0 4px; background: #efefef; border: 1px solid #767676; border-radius: 2px; display: grid; place-items: center; }
  .ruled .select { margin-top: 10px; }
  .ruled .search, .ruled .go { margin-top: 9px; }
  .links { margin-left: auto; margin-right: 355px; display: flex; font-size: 12.8px; line-height: 47px; }
  .links a { color: inherit; text-decoration: none; margin-right: 27px; }
  .links a:last-of-type { margin-right: 14px; }
  .trolley { margin-top: 15px; }
  .ruled .trolley { margin-top: 14px; }
  .cart .links { margin-right: 353px; }
  .body { background: #f5de9b; overflow: hidden; }
  .restaurant .body { height: 782px; padding-top: 54px; }
  .title { display: flex; height: 68px; }
  .title h2 { width: 184px; margin-left: -2px; line-height: 36px; }
  .title span { font-size: 16.35px; line-height: 34px; }
  .location { margin: 4px 0 0 -3px; }
  .street-address { margin-top: 11px; padding-left: 35px; text-align: center; line-height: 16px; width: 1702px; }
  .map { position: relative; margin: 10px 0 0 256px; width: 1209px; height: 545px; overflow: hidden; }
  .canvas { display: block; width: 1209px; height: 545px; }
  .types, .control, .legal { position: absolute; background: #fff; }
  .types { left: 9px; top: 9px; width: 175px; height: 36px; border-radius: 2px; display: flex; font: 16px/36px Roboto, sans-serif; color: #565656; text-align: center; letter-spacing: .2px; box-shadow: 0 1px 3px rgba(0, 0, 0, .25); }
  .types b { width: 75px; padding-left: 1px; font-weight: 500; color: #000; border-right: 1px solid #e8e8e8; }
  .types span { flex: 1; }
  .control { left: 1164px; width: 36px; height: 36px; border-radius: 2px; display: flex; flex-direction: column; align-items: center; justify-content: center; box-shadow: 0 1px 3px rgba(0, 0, 0, .22); }
  .full { top: 9px; }
  .pegman { top: 384px; }
  .zoom { top: 449px; height: 74px; gap: 10px; }
  .zoom i { width: 27px; height: 1px; background: #e6e6e6; }
  .legal { right: 0; bottom: 0; height: 13px; padding: 0 6px; font: 8.9px/13px Roboto, sans-serif; letter-spacing: .15px; color: #111; background: rgba(245, 245, 245, .75); display: flex; gap: 10px; }

  .park { fill: #c6e9c8; }
  .sand { fill: #feebc2; }
  .water { fill: #aadaff; }
  .campus { fill: #f1f3f5; }
  .land { fill: #ebebeb; }
  .mall { fill: #fef5dc; }
  .trail, .dash { fill: none; stroke: #7ecb95; stroke-width: 3.500; }
  .dash { stroke-dasharray: 10 6; }
  .thin, .mid, .wide, .avenue, .highway, .highway-edge { fill: none; stroke: #fff; stroke-linejoin: round; stroke-linecap: round; }
  .thin { stroke-width: 7; }
  .mid { stroke-width: 10; }
  .wide { stroke-width: 17; }
  .avenue { stroke-width: 25; }
  .highway-edge { stroke: #f6cf73; stroke-width: 27; }
  .highway { stroke: #ffeda6; stroke-width: 20; }
  .highway-edge.ramp { stroke-width: 14; }
  .highway.ramp { stroke-width: 9; }
  .canvas text { font-family: Roboto, sans-serif; text-anchor: middle; font-size: 38px; paint-order: stroke; stroke: rgba(255, 255, 255, .85); stroke-width: 6px; stroke-linejoin: round; }
  .canvas text.shop { fill: #3b82f0; }
  .canvas text.civic { fill: #5c7480; }
  .canvas text.nature { fill: #2c8b4b; }
  .canvas text.parking { fill: #5f6bc0; }
  .canvas text.food { fill: #e0740c; }
  .canvas text.sight { fill: #1592a2; }
  .canvas text.lake { fill: #5b8fd9; stroke: none; font-size: 34px; }
  .canvas text.campus-name { fill: #4d7382; font-weight: 500; font-size: 43px; }
  .canvas text.area { fill: #7f90ad; font-weight: 500; font-size: 42px; }
  .canvas text.faint { opacity: .35; }
  .canvas text.street { fill: #7c7c7c; font-size: 24.5px; stroke-width: 5px; }
  .canvas text.road { fill: #5f6368; font-size: 30px; }
  .canvas text.major { fill: #8a5a22; font-size: 33px; }
  .canvas text.shield { font-size: 24px; fill: #444; stroke: none; }
  .canvas text.pin-letter { font-size: 36px; font-weight: 700; fill: #fff; stroke: none; }
  .canvas text.google { font-family: 'Open Sans', sans-serif; font-size: 56px; font-weight: 600; text-anchor: start; }

  .page-title { padding: 17px 0 0 16px; text-align: center; height: 106px; }
  .order { padding-left: 29px; line-height: 40px; height: 47px; }
  .items { display: grid; grid-template-columns: 417px 677px 476px 1fr; height: 35px; border-top: 1px solid #e4dccb; border-bottom: 2px solid #ddd; line-height: 32px; }
  .items b { border-left: 1px solid #e6dccb; padding-left: 7px; }
  .items b:first-child { border: 0; padding-left: 4px; }
  .tip { margin: 36px 0 0 40px; }
  .tips { display: flex; gap: 3.500px; margin: 27px 0 0 25px; }
  .tips button { height: 24px; min-width: 40px; padding: 0 6px; font: bold 12.8px/20px 'Liberation Sans', Arial, sans-serif; color: #333; background: #efefef; border: 1px solid #767676; border-radius: 2px; }
  .pickup { margin: 22px 0 0 -4px; }
  .toggle { display: flex; margin-top: 9px; height: 31px; line-height: 31px; color: #fff; }
  .toggle span { width: 70px; text-align: center; background: #337ab7; border-radius: 0 4px 4px 0; }
  .toggle .on { width: 63px; padding-right: 3px; background: #286090; border-radius: 0; box-shadow: inset 0 3px 5px rgba(0, 0, 0, .125); border-right: 1px solid #204d74; }
  .address { margin: 18px 0 0 40px; }
  .saved { width: 18px; height: 18px; margin-top: 9px; background: #fff; border: 1px solid #767676; border-left: 0; display: grid; place-items: center; }
  .note-label { margin: 56px 0 0 -3px; font-weight: 700; line-height: 16px; }
  .note { width: 317px; height: 24px; margin-top: 5px; border: 1px solid #767676; border-left: 0; background: #fff; color: #757575; line-height: 23px; }
  .total { margin: 54px 0 0 -3px; }
  .totals { margin-top: 10px; }
  .totals div { display: grid; grid-template-columns: 1302px 1fr; height: 33.600px; border-top: 1px solid #e2dcd0; line-height: 33px; }
  .totals b { padding-left: 5px; }
  .totals span { border-left: 1px solid #e6dccb; padding-left: 8px; }
</style>
